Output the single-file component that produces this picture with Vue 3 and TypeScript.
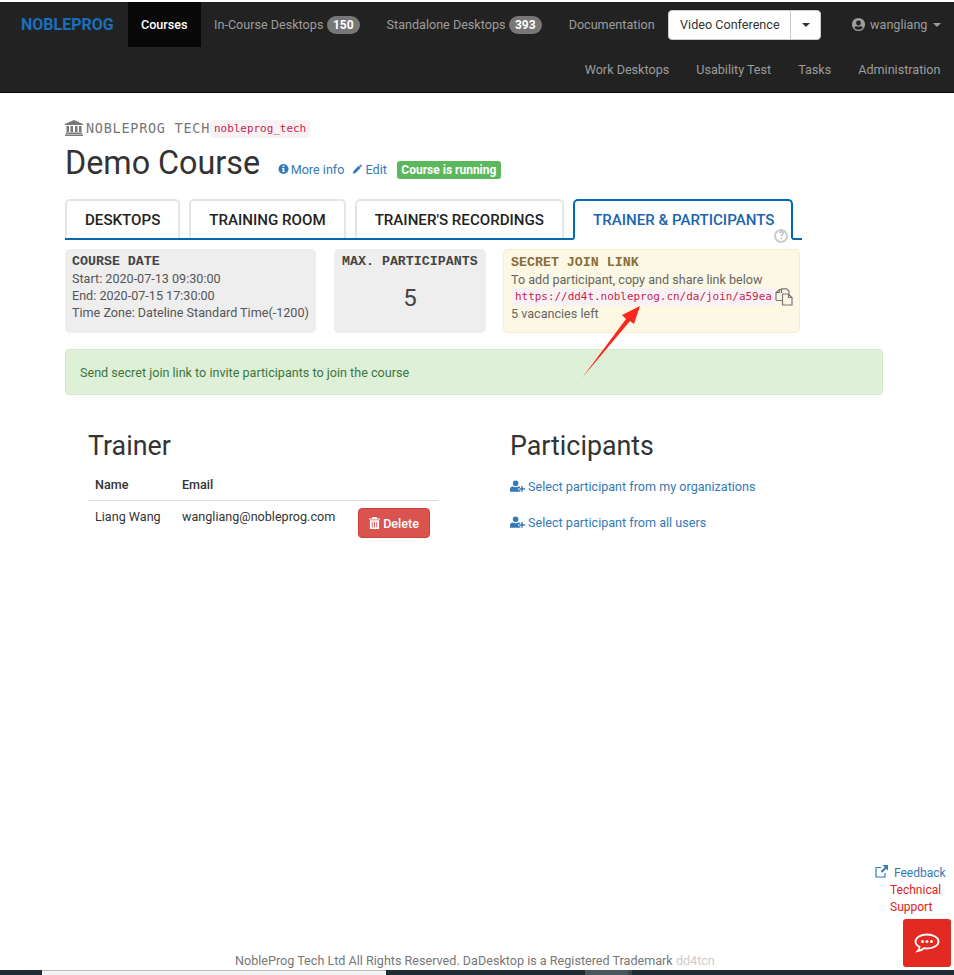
<script setup lang="ts">
const topLinks = [
  { label: 'In-Course Desktops', badge: '150' },
  { label: 'Standalone Desktops', badge: '393' },
  { label: 'Documentation', badge: '' },
]
const secondLinks = ['Work Desktops', 'Usability Test', 'Tasks', 'Administration']
const tabs = ['DESKTOPS', 'TRAINING ROOM', "TRAINER'S RECORDINGS"]
</script>

<template>
  <div class="page">
    <nav class="nav">
      <div class="nav-row">
        <a class="brand">NOBLEPROG</a>
        <a class="nav-link active">Courses</a>
        <a v-for="l in topLinks" :key="l.label" class="nav-link">
          {{ l.label }}<span v-if="l.badge" class="badge">{{ l.badge }}</span>
        </a>
        <div class="btn-group">
          <span class="vc">Video Conference</span>
          <span class="vc-caret"><i class="caret dark"></i></span>
        </div>
        <a class="user">
          <svg class="user-ico" viewBox="0 0 16 16"><path fill="currentColor" fill-rule="evenodd" d="M8 1a7 7 0 1 1 0 14A7 7 0 0 1 8 1zm0 2.800a2.600 2.600 0 1 0 0 5.200 2.600 2.600 0 0 0 0-5.200zM8 13.500c1.800 0 3.400-.8 4.500-2.100-.6-1-1.600-1.500-2.600-1.500-.6.300-1.200.4-1.900.4s-1.300-.1-1.900-.4c-1 0-2 .5-2.600 1.500 1.100 1.300 2.700 2.100 4.500 2.100z"/></svg>
          wangliang<i class="caret"></i>
        </a>
      </div>
      <div class="nav-row second">
        <a v-for="l in secondLinks" :key="l" class="nav-link">{{ l }}</a>
      </div>
    </nav>

    <main class="main">
      <div class="org">
        <svg class="bank" viewBox="0 0 18 16"><path fill="#777" d="M9 0l9 4v1H0V4zM1.500 6h2.500v6H1.500zM5.500 6H8v6H5.500zM10 6h2.500v6H10zM14 6h2.500v6H14zM1 12.500h16V14H1zM0 14.500h18V16H0z"/></svg>
        <span class="org-name">NOBLEPROG TECH</span><code class="org-code">nobleprog_tech</code>
      </div>
      <div class="title-row">
        <h1>Demo Course</h1>
        <a class="link info">
          <svg class="ico" viewBox="0 0 12 12"><path fill="currentColor" fill-rule="evenodd" d="M6 .5a5.500 5.500 0 1 1 0 11 5.500 5.500 0 0 1 0-11zM5 2.200v1.700h2V2.200zM4.500 5v1h.6v2.400h-.6v1h3v-1h-.6V5z"/></svg>
          More info
        </a>
        <a class="link edit">
          <svg class="ico" viewBox="0 0 12 12"><path fill="currentColor" d="M9 .8l2.200 2.200-1 1L8 1.800zM7.300 2.500l2.200 2.200-5.600 5.600L.8 11.200l.9-3.100z"/></svg>
          Edit
        </a>
        <span class="running">Course is running</span>
      </div>

      <div class="tabs">
        <a v-for="t in tabs" :key="t" class="tab">{{ t }}</a>
        <a class="tab current">TRAINER &amp; PARTICIPANTS
          <span class="help">?</span>
        </a>
      </div>

      <div class="cards">
        <section class="card date">
          <h5>COURSE DATE</h5>
          <div>Start: 2020-07-13 09:30:00</div>
          <div>End: 2020-07-15 17:30:00</div>
          <div>Time Zone: Dateline Standard Time(-1200)</div>
        </section>
        <section class="card max">
          <h5>MAX. PARTICIPANTS</h5>
          <div class="num">5</div>
        </section>
        <section class="card secret">
          <h5>SECRET JOIN LINK</h5>
          <div>To add participant, copy and share link below</div>
          <div class="link-row">
            <code class="join">https://dd4t.nobleprog.cn/da/join/a59ea</code>
            <svg class="copy" viewBox="0 0 18 18"><path fill="none" stroke="#777" stroke-width="1.200" d="M6.500 5V.8h5l2.500 2.500v2.500M1 12.500V4.500l3.500-3h2M4.500 1.500V4.500H1M1 12.500h6M7.500 6h6L17 9.500v7.500H7.500zM13.500 6v3.500H17"/></svg>
          </div>
          <div>5 vacancies left</div>
          <svg class="arrow" viewBox="0 0 58 72"><path fill="#f9281c" d="M0 72 L44 13 L40 9 L58 0 L52 18 L48 15 Z"/></svg>
        </section>
      </div>

      <div class="alert">Send secret join link to invite participants to join the course</div>

      <div class="columns">
        <section class="trainer">
          <h2>Trainer</h2>
          <table>
            <thead>
              <tr><th class="c1">Name</th><th class="c2">Email</th><th class="c3"></th></tr>
            </thead>
            <tbody>
              <tr>
                <td>Liang Wang</td>
                <td>wangliang@nobleprog.com</td>
                <td>
                  <button class="del">
                    <svg class="ico trash" viewBox="0 0 12 13"><path fill="#fff" fill-rule="evenodd" d="M4 0h4l1 1.500h3v1.200H0V1.500h3zM1 3.500h10V13H1zM3 5v6.500h1V5zm2.500 0v6.500h1V5zM8 5v6.500h1V5z"/></svg>
                    Delete
                  </button>
                </td>
              </tr>
            </tbody>
          </table>
        </section>
        <section class="participants">
          <h2>Participants</h2>
          <a class="link add">
            <svg class="ico add-ico" viewBox="0 0 16 12"><path fill="currentColor" d="M6 0a3 3 0 1 1 0 6 3 3 0 0 1 0-6zM0 12V9.500C0 7.800 1.200 6.500 3 6.500c.8.500 1.800.8 3 .8s2.200-.3 3-.8c.6 0 1.100.1 1.600.4V8H9v2.500h2V12zM12 6h1.500v2.500H16V10h-2.500v2H12v-2H9.800V8.500H12z"/></svg>
            Select participant from my organizations
          </a>
          <a class="link add second-add">
            <svg class="ico add-ico" viewBox="0 0 16 12"><path fill="currentColor" d="M6 0a3 3 0 1 1 0 6 3 3 0 0 1 0-6zM0 12V9.500C0 7.800 1.200 6.500 3 6.500c.8.500 1.800.8 3 .8s2.200-.3 3-.8c.6 0 1.100.1 1.600.4V8H9v2.500h2V12zM12 6h1.500v2.500H16V10h-2.500v2H12v-2H9.800V8.500H12z"/></svg>
            Select participant from all users
          </a>
        </section>
      </div>
    </main>

    <aside class="side">
      <a class="feedback">
        <svg class="ext" viewBox="0 0 13 13"><path fill="none" stroke="currentColor" stroke-width="1.200" d="M6 2.500H1v9.500h9V8"/><path fill="currentColor" d="M7.500 0H13v5.500l-1.800-1.800-4 4-1.400-1.400 4-4z"/></svg>
        Feedback
      </a>
      <div class="support">Technical<br />Support</div>
      <div class="chat">
        <svg viewBox="0 0 26 20" width="26" height="20"><path fill="none" stroke="#fff" stroke-width="1.800" d="M13 1.500c6.300 0 11.500 3 11.500 7s-5.200 7-11.500 7c-1 0-2-.1-3-.3-1.500 1.300-3.400 2.500-6.300 3 1.100-1.200 1.800-2.600 1.900-4.400C3 12.700 1.500 10.700 1.500 8.500c0-4 5.200-7 11.500-7z"/><circle fill="#fff" cx="8.500" cy="8.500" r="1.500"/><circle fill="#fff" cx="13" cy="8.500" r="1.500"/><circle fill="#fff" cx="17.500" cy="8.500" r="1.500"/></svg>
      </div>
    </aside>

    <footer class="footer">
      NobleProg Tech Ltd All Rights Reserved. DaDesktop is a Registered Trademark <span class="srv">dd4tcn</span>
    </footer>

    <div class="strip">
      <span class="s-a"></span><span class="s-b"></span><span class="s-c"></span><span class="s-d"></span><span class="s-e"></span>
    </div>
  </div>
</template>

<style>
html, body { margin: 0; background: #fff; }
</style>

<style scoped>
.page {
  position: relative;
  width: 954px;
  height: 975px;
  overflow: hidden;
  font-family: Roboto, "Liberation Sans", sans-serif;
  font-size: 12.6px;
  line-height: 20px;
  color: #333;
  background: #fff;
}
a { text-decoration: none; }

.nav {
  margin-top: 2px;
  height: 90px;
  background: #222;
  border-bottom: 1px solid #080808;
}
.nav-row { display: flex; align-items: center; height: 45px; }
.nav-row.second { justify-content: flex-end; }
.brand {
  box-sizing: border-box;
  flex: none;
  width: 128px;
  padding-left: 21px;
  font-size: 16px;
  font-weight: 700;
  color: #1a6fbd;
}
.nav-link {
  display: flex;
  flex: none;
  align-items: center;
  padding: 0 13.5px;
  height: 45px;
  color: #9d9d9d;
  white-space: nowrap;
}
.nav-link.active { background: #080808; color: #fff; font-weight: 500; padding: 0 13px; }
.badge {
  margin-left: 3.5px;
  padding: 0 6px;
  height: 18px;
  border-radius: 10px;
  background: #777;
  color: #fff;
  font-size: 12px;
  font-weight: 700;
  line-height: 18px;
}
.btn-group {
  display: flex;
  flex: none;
  height: 30px;
  background: #fff;
  border: 1px solid #ccc;
  border-radius: 4px;
  box-sizing: border-box;
  color: #333;
  align-items: stretch;
  line-height: 28px;
  white-space: nowrap;
}
.vc { padding: 0 10.5px 0 11px; border-right: 1px solid #ccc; }
.vc-caret { width: 29px; display: flex; align-items: center; justify-content: center; }
.caret {
  display: inline-block;
  width: 0;
  height: 0;
  margin-left: 6px;
  border-top: 4px solid #9d9d9d;
  border-left: 4px solid transparent;
  border-right: 4px solid transparent;
}
.caret.dark { border-top-color: #333; margin-left: 0; }
.user {
  display: flex;
  flex: none;
  align-items: center;
  margin-left: 30px;
  color: #9d9d9d;
  white-space: nowrap;
}
.user-ico { width: 15px; height: 15px; margin-right: 4px; }

.main { padding: 0 71px 0 65px; }
.org { display: flex; align-items: center; margin-top: 25px; height: 20px; }
.bank { width: 18px; height: 16px; margin-right: 3px; flex: none; }
.org-name {
  font-family: "DejaVu Sans Mono", "Liberation Mono", monospace;
  font-size: 13.5px;
  color: #777;
  letter-spacing: 0.73px;
  white-space: nowrap;
}
.org-code, .join {
  font-family: "DejaVu Sans Mono", "Liberation Mono", monospace;
  font-size: 10.95px;
  color: #c7254e;
  background: #f9f2f4;
  border-radius: 4px;
  line-height: 14px;
}
.org-code { margin-top: 2px; padding: 2px 4px; }
.title-row { display: flex; align-items: baseline; margin-top: 5px; height: 40px; }
h1 {
  margin: 0;
  font-size: 32.3px;
  font-weight: 400;
  line-height: 40px;
  color: #333;
}
.link { color: #337ab7; }
.ico { display: inline-block; vertical-align: -1px; }
.info { margin-left: 17.5px; }
.info .ico, .edit .ico { width: 11px; height: 12px; margin-right: -1px; }
.edit { margin-left: 8px; }
.running {
  margin-left: 10px;
  background: #5cb85c;
  color: #fff;
  font-size: 12px;
  font-weight: 700;
  line-height: 18px;
  padding: 0 4.5px;
  border-radius: 3px;
}
.tabs {
  display: flex;
  gap: 9px;
  margin-top: 16px;
  height: 39px;
  width: 737px;
  border-bottom: 2px solid #0069b4;
}
.tab {
  box-sizing: border-box;
  flex: none;
  height: 39px;
  padding: 0 18px;
  border: 2px solid #e5e5e5;
  border-bottom: none;
  border-radius: 5px 5px 0 0;
  background: #fff;
  font-size: 15.12px;
  font-weight: 500;
  color: #222;
  line-height: 38px;
  white-space: nowrap;
}
.tab.current {
  position: relative;
  height: 41px;
  padding-right: 17px;
  color: #1a64b0;
  border-color: #0069b4;
  border-bottom: 2px solid #fff;
}
.help {
  position: absolute;
  right: 3px;
  top: 28px;
  box-sizing: border-box;
  width: 14px;
  height: 14px;
  border: 2px solid #ccc;
  border-radius: 50%;
  color: #bbb;
  background: #fff;
  font-size: 10px;
  font-weight: 700;
  line-height: 10px;
  text-align: center;
}
.cards { display: flex; margin-top: 9px; gap: 18px; height: 84px; }
.card {
  box-sizing: border-box;
  height: 84px;
  padding: 4px 7px;
  background: #eee;
  border-radius: 5px;
  line-height: 17px;
  color: #555;
  white-space: nowrap;
}
.card h5 {
  margin: 0;
  font-family: "Liberation Mono", "DejaVu Sans Mono", monospace;
  font-size: 13.3px;
  font-weight: 700;
  line-height: 17px;
  color: #444;
}
.date { width: 251px; }
.max { width: 152px; padding: 4px 8px; }
.num { text-align: center; font-size: 24px; line-height: 30px; margin-top: 13px; color: #444; }
.secret {
  position: relative;
  width: 297px;
  background: #fcf8e3;
  border: 1px solid #faebcc;
  margin-left: -1px;
  color: #666;
}
.secret h5 { color: #8a6d3b; }
.link-row { display: flex; align-items: center; height: 17px; }
.join { padding: 2px 3px 2px 4px; white-space: nowrap; }
.copy { flex: none; width: 18px; height: 18px; }
.arrow { position: absolute; left: 78px; top: 56px; width: 58px; height: 72px; }
.alert {
  box-sizing: border-box;
  height: 46px;
  margin-top: 16px;
  width: 818px;
  padding: 13px 14px;
  background: #dff0d8;
  border: 1px solid #d6e9c6;
  border-radius: 4px;
  color: #3c763d;
}
.columns { display: flex; margin-top: 31px; padding-left: 23px; }
.trainer { width: 350px; flex: none; }
.participants { margin-left: 72px; }
h2 {
  margin: 0;
  font-size: 26.8px;
  font-weight: 400;
  line-height: 40px;
  color: #333;
}
table { width: 350px; table-layout: fixed; border-collapse: collapse; margin-top: 2px; }
th { text-align: left; font-weight: 500; padding: 9px 7px 7px; border-bottom: 1px solid #ddd; line-height: 16px; }
td { padding: 7px; vertical-align: top; line-height: 17px; white-space: nowrap; }
.c1 { width: 87px; box-sizing: border-box; }
.c2 { width: 176px; box-sizing: border-box; }
.del {
  display: block;
  width: 72px;
  height: 30px;
  padding: 0;
  background: #d9534f;
  border: 1px solid #d43f3a;
  border-radius: 4px;
  color: #fff;
  font-family: inherit;
  font-size: 12.6px;
  font-weight: 500;
}
.trash { width: 11px; height: 12px; }
.add { display: block; margin-top: 11px; }
.second-add { margin-top: 16px; }
.add-ico { width: 15px; height: 12px; }
.side {
  position: absolute;
  top: 865px;
  right: 3px;
  width: 76px;
  font-size: 12px;
  line-height: 17px;
}
.feedback { display: block; color: #337ab7; white-space: nowrap; }
.ext { width: 13px; height: 13px; vertical-align: -1px; margin-right: 3px; }
.support { margin-left: 15px; color: #e02020; }
.chat {
  width: 48px;
  height: 48px;
  margin: 3px 0 0 28px;
  background: #e22a22;
  border-radius: 3px;
  display: flex;
  align-items: center;
  justify-content: center;
}
.footer {
  position: absolute;
  left: 235px;
  top: 952px;
  font-size: 12.6px;
  line-height: 18px;
  color: #777;
  white-space: nowrap;
}
.srv { color: #ccc; }
.strip {
  position: absolute;
  left: 0;
  right: 0;
  bottom: 0;
  height: 5px;
  display: flex;
  background: #1f2c33;
}
.s-a { width: 42px; }
.s-b { box-sizing: border-box; width: 344px; background: #f2f2f2; border-top: 1px solid #bbb; }
.s-c { width: 199px; }
.s-d { width: 43px; background: #4a565c; }
.s-e { width: 4px; background: #39464d; }
</style>
